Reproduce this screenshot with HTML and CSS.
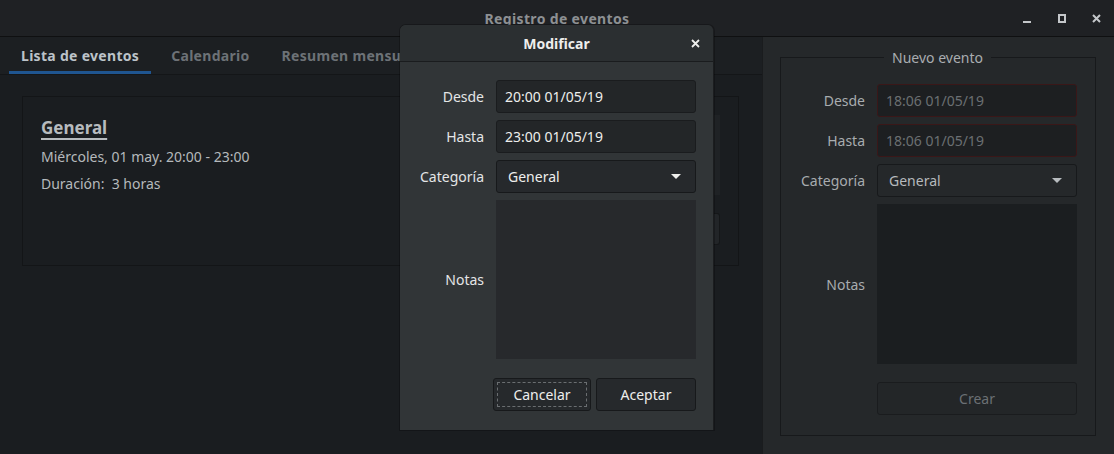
FILE: index.html
```html
<!DOCTYPE html>
<html lang="es">
<head>
<meta charset="utf-8">
<title>Registro de eventos</title>
<link rel="stylesheet" href="styles.css">
</head>
<body>
<div class="window">
  <header class="titlebar">
    <div class="title">Registro de eventos</div>
    <div class="controls">
      <span class="ctl ctl-min"></span>
      <span class="ctl ctl-max"></span>
      <span class="ctl ctl-close">
        <svg width="9" height="9" viewBox="0 0 9 9"><path d="M1 1 L8 8 M8 1 L1 8" stroke="#c4c7ca" stroke-width="2"/></svg>
      </span>
    </div>
  </header>
  <div class="main">
    <section class="left">
      <nav class="tabs">
        <div class="tab active">Lista de eventos</div>
        <div class="tab">Calendario</div>
        <div class="tab">Resumen mensual</div>
      </nav>
      <div class="list">
        <article class="card">
          <div class="card-info">
            <div class="card-title">General</div>
            <div class="card-line">Miércoles, 01 may. 20:00 - 23:00</div>
            <div class="card-line">Duración:&nbsp; 3 horas</div>
          </div>
          <div class="card-side">
            <div class="card-notes"></div>
            <div class="card-btn"></div>
          </div>
        </article>
      </div>
    </section>
    <aside class="right">
      <fieldset class="frame">
        <legend>Nuevo evento</legend>
        <div class="form form-new">
          <label>Desde</label>
          <div class="entry entry-invalid placeholder">18:06 01/05/19</div>
          <label>Hasta</label>
          <div class="entry entry-invalid placeholder">18:06 01/05/19</div>
          <label>Categoría</label>
          <div class="combo combo-dim"><span>General</span><span class="arrow"></span></div>
          <label class="notes-label">Notas</label>
          <div class="textview textview-new"></div>
          <span></span>
          <div class="btn btn-crear">Crear</div>
        </div>
      </fieldset>
    </aside>
  </div>
</div>

<div class="dialog">
  <div class="dialog-head">
    <span class="dialog-title">Modificar</span>
    <span class="dialog-close">
      <svg width="9" height="9" viewBox="0 0 9 9"><path d="M1 1 L8 8 M8 1 L1 8" stroke="#eeeeec" stroke-width="1.8"/></svg>
    </span>
  </div>
  <div class="dialog-body">
    <div class="form form-dialog">
      <label>Desde</label>
      <div class="entry">20:00 01/05/19</div>
      <label>Hasta</label>
      <div class="entry">23:00 01/05/19</div>
      <label>Categoría</label>
      <div class="combo"><span>General</span><span class="arrow"></span></div>
      <label class="notes-label">Notas</label>
      <div class="textview"></div>
    </div>
    <div class="dialog-actions">
      <div class="btn btn-focus"><span class="focus-ring">Cancelar</span></div>
      <div class="btn btn-accept">Aceptar</div>
    </div>
  </div>
</div>
</body>
</html>
```
FILE: styles.css
```css
*, *::before, *::after { box-sizing: border-box; }
html, body { margin: 0; padding: 0; }
body {
  width: 1114px;
  height: 454px;
  overflow: hidden;
  background: #1a1d20;
  font-family: "Noto Sans", "Open Sans", sans-serif;
  font-size: 14px;
  color: #c8ccd0;
  position: relative;
}
.window { display: flex; flex-direction: column; height: 454px; }

.titlebar {
  height: 37px;
  flex: none;
  background: #1f2124;
  border-bottom: 1px solid #0f1011;
  position: relative;
  display: flex;
  align-items: center;
  justify-content: center;
}
.title { font-weight: bold; color: #8d9093; font-size: 14px; letter-spacing: 0.35px; }
.controls {
  position: absolute;
  right: 0;
  top: 0;
  height: 36px;
  display: flex;
  align-items: center;
}
.ctl { width: 35px; height: 36px; display: flex; align-items: center; justify-content: center; }
.ctl-min::after { content: ""; width: 8px; height: 2px; background: #c4c7ca; margin-top: 8px; }
.ctl-max::after { content: ""; width: 8px; height: 9px; border: 2px solid #c4c7ca; margin-left: 1px; }

.main { flex: 1; display: flex; min-height: 0; }
.left { width: 762px; flex: none; background: #1a1d20; display: flex; flex-direction: column; }
.tabs {
  height: 38px;
  display: flex;
  padding-left: 9px;
  gap: 8px;
  background: #1c1f22;
  border-bottom: 1px solid #141618;
}
.tab {
  padding: 0 12px;
  font-weight: bold;
  letter-spacing: 0.3px;
  color: #6d7277;
  display: flex;
  align-items: center;
  border-bottom: 3px solid transparent;
  padding-top: 2px;
}
.tab.active { color: #bcc3c9; border-bottom-color: #1f5590; }

.list { flex: 1; padding: 21px 23px 0 22px; }
.card {
  height: 170px;
  border: 1px solid #131517;
  background: #1a1d20;
  display: flex;
  justify-content: space-between;
  padding: 20px 0 0 18px;
}
.card-title {
  font-size: 17px;
  font-weight: bold;
  color: #b7bbbe;
  text-decoration: underline;
  text-decoration-thickness: 2px;
  text-underline-offset: 4px;
  margin-bottom: 4px;
  line-height: 22px;
}
.card-line { line-height: 27px; color: #b5b9bc; }
.card-side { width: 20px; display: flex; flex-direction: column; gap: 18px; margin-right: 18px; margin-top: -2px; }
.card-notes { height: 80px; background: #1f2225; }
.card-btn { height: 32px; background: #222528; border: 1px solid #151719; border-left: none; border-radius: 0 3px 3px 0; }

.right {
  flex: 1;
  background: #25282a;
  padding: 11px 18px 18px 17px;
  border-left: 1px solid #1a1c1e;
}
.frame {
  margin: 0;
  height: 388px;
  border: 1px solid #17191b;
  padding: 17px 18px 18px 17px;
}
.frame legend {
  margin: 0 auto;
  padding: 0 8px;
  color: #a9adb0;
  font-size: 14px;
}

.form {
  display: grid;
  grid-template-columns: 1fr 200px;
  column-gap: 12px;
}
.form label { text-align: right; display: flex; align-items: center; justify-content: flex-end; }
.form-new { row-gap: 7px; grid-template-rows: 33px 33px 33px 160px 33px; }
.form-new label { color: #a8acaf; }
.form-new .btn-crear { margin-top: 11px; }
.form-dialog { row-gap: 7px; grid-template-rows: 33px 33px 33px 159px; }
.form-dialog label { color: #e4e5e6; }

.entry {
  background: #232628;
  border: 1px solid #1a1c1e;
  border-radius: 3px;
  padding: 0 8px;
  display: flex;
  align-items: center;
  color: #eeeeec;
}
.entry-invalid { background: #1d1f21; border-color: #3a1718; }
.placeholder { color: #6b6f72; }
.combo {
  background: #26292c;
  border: 1px solid #17191b;
  border-radius: 3px;
  padding: 0 14px 0 11px;
  display: flex;
  align-items: center;
  justify-content: space-between;
  color: #eeeeec;
}
.combo-dim { background: #25282a; color: #b6babd; }
.arrow { width: 0; height: 0; border-left: 5px solid transparent; border-right: 5px solid transparent; border-top: 5px solid #eeeeec; }
.combo-dim .arrow { border-top-color: #b8bcbf; }
.textview { background: #27292c; }
.textview-new { background: #1b1e20; }

.btn {
  height: 33px;
  border: 1px solid #17191b;
  border-radius: 3px;
  background: #26292c;
  display: flex;
  align-items: center;
  justify-content: center;
  color: #eeeeec;
}
.btn-crear { background: #232628; color: #6b7074; border-color: #1a1c1e; }

.dialog {
  position: absolute;
  left: 400px;
  top: 25px;
  width: 314px;
  height: 405px;
  background: #313537;
  border-radius: 6px 6px 0 0;
  border-right: 1px solid #1b1d1f;
  display: flex;
  flex-direction: column;
  box-shadow: 0 0 0 1px rgba(0,0,0,0.25);
}
.dialog-head {
  height: 37px;
  flex: none;
  background: #2b2f31;
  border-bottom: 1px solid #1a1c1e;
  border-radius: 6px 6px 0 0;
  display: flex;
  align-items: center;
  justify-content: center;
  position: relative;
}
.dialog-title { font-weight: bold; color: #eeeeec; }
.dialog-close { position: absolute; right: 13px; top: 14px; width: 9px; height: 9px; display: flex; }
.dialog-body { flex: 1; padding: 18px 17px 18px 18px; display: flex; flex-direction: column; }
.dialog-actions { display: flex; justify-content: flex-end; gap: 5px; margin-top: 19px; }
.btn-focus { width: 98px; padding: 3px; }
.focus-ring { flex: 1; height: 100%; border: 1px dashed #6a6e71; display: flex; align-items: center; justify-content: center; }
.btn-accept { width: 100px; }
```
